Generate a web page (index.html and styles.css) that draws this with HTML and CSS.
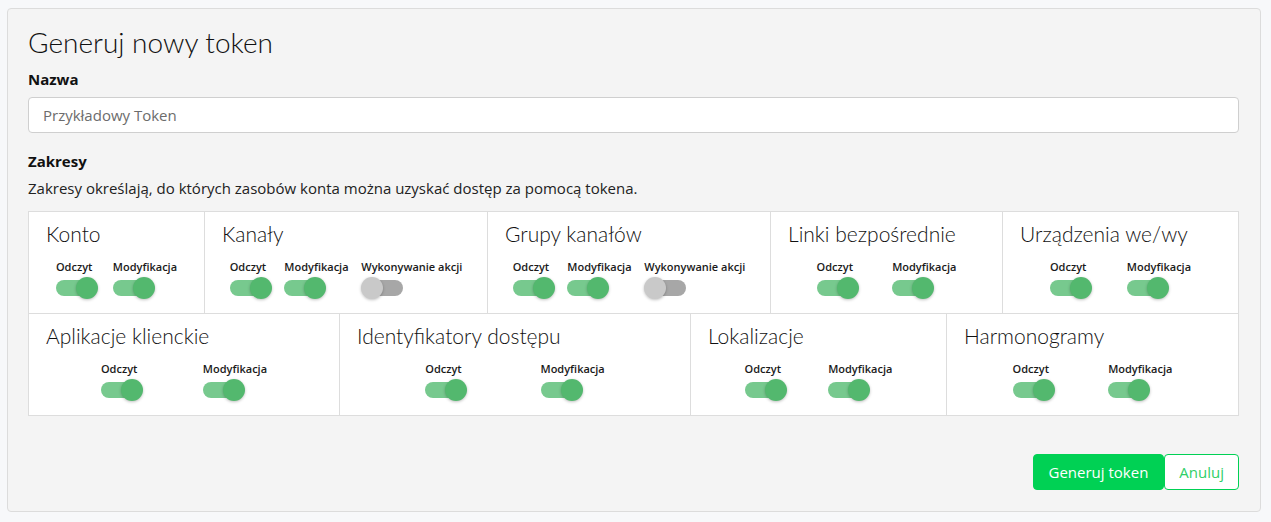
FILE: index.html
```html
<!DOCTYPE html>
<html>
  <head>
    <title>Generuj nowy token</title>
    <link rel="stylesheet" href="styles.css">
  </head>
  <body>
    <div class="panel">
      <h2 class="title">Generuj nowy token</h2>

      <label class="field-label" for="name">Nazwa</label>
      <input class="text-input" type="text" id="name" name="name" placeholder="Przykładowy Token">

      <div class="field-label section-label">Zakresy</div>
      <p class="hint">Zakresy określają, do których zasobów konta można uzyskać dostęp za pomocą tokena.</p>

      <div class="scopes">
        <div class="scope-row row-top">
          <div class="scope">
            <h3 class="scope-title">Konto</h3>
            <div class="toggles">
              <div class="toggle"><span class="toggle-label">Odczyt</span><span class="switch on"><span class="track"></span><span class="knob"></span></span></div>
              <div class="toggle"><span class="toggle-label">Modyfikacja</span><span class="switch on"><span class="track"></span><span class="knob"></span></span></div>
            </div>
          </div>
          <div class="scope">
            <h3 class="scope-title">Kanały</h3>
            <div class="toggles">
              <div class="toggle"><span class="toggle-label">Odczyt</span><span class="switch on"><span class="track"></span><span class="knob"></span></span></div>
              <div class="toggle"><span class="toggle-label">Modyfikacja</span><span class="switch on"><span class="track"></span><span class="knob"></span></span></div>
              <div class="toggle"><span class="toggle-label">Wykonywanie akcji</span><span class="switch off"><span class="track"></span><span class="knob"></span></span></div>
            </div>
          </div>
          <div class="scope">
            <h3 class="scope-title">Grupy kanałów</h3>
            <div class="toggles">
              <div class="toggle"><span class="toggle-label">Odczyt</span><span class="switch on"><span class="track"></span><span class="knob"></span></span></div>
              <div class="toggle"><span class="toggle-label">Modyfikacja</span><span class="switch on"><span class="track"></span><span class="knob"></span></span></div>
              <div class="toggle"><span class="toggle-label">Wykonywanie akcji</span><span class="switch off"><span class="track"></span><span class="knob"></span></span></div>
            </div>
          </div>
          <div class="scope">
            <h3 class="scope-title">Linki bezpośrednie</h3>
            <div class="toggles">
              <div class="toggle"><span class="toggle-label">Odczyt</span><span class="switch on"><span class="track"></span><span class="knob"></span></span></div>
              <div class="toggle"><span class="toggle-label">Modyfikacja</span><span class="switch on"><span class="track"></span><span class="knob"></span></span></div>
            </div>
          </div>
          <div class="scope">
            <h3 class="scope-title">Urządzenia we/wy</h3>
            <div class="toggles">
              <div class="toggle"><span class="toggle-label">Odczyt</span><span class="switch on"><span class="track"></span><span class="knob"></span></span></div>
              <div class="toggle"><span class="toggle-label">Modyfikacja</span><span class="switch on"><span class="track"></span><span class="knob"></span></span></div>
            </div>
          </div>
        </div>

        <div class="scope-row row-bottom">
          <div class="scope">
            <h3 class="scope-title">Aplikacje klienckie</h3>
            <div class="toggles">
              <div class="toggle"><span class="toggle-label">Odczyt</span><span class="switch on"><span class="track"></span><span class="knob"></span></span></div>
              <div class="toggle"><span class="toggle-label">Modyfikacja</span><span class="switch on"><span class="track"></span><span class="knob"></span></span></div>
            </div>
          </div>
          <div class="scope">
            <h3 class="scope-title">Identyfikatory dostępu</h3>
            <div class="toggles">
              <div class="toggle"><span class="toggle-label">Odczyt</span><span class="switch on"><span class="track"></span><span class="knob"></span></span></div>
              <div class="toggle"><span class="toggle-label">Modyfikacja</span><span class="switch on"><span class="track"></span><span class="knob"></span></span></div>
            </div>
          </div>
          <div class="scope">
            <h3 class="scope-title">Lokalizacje</h3>
            <div class="toggles">
              <div class="toggle"><span class="toggle-label">Odczyt</span><span class="switch on"><span class="track"></span><span class="knob"></span></span></div>
              <div class="toggle"><span class="toggle-label">Modyfikacja</span><span class="switch on"><span class="track"></span><span class="knob"></span></span></div>
            </div>
          </div>
          <div class="scope">
            <h3 class="scope-title">Harmonogramy</h3>
            <div class="toggles">
              <div class="toggle"><span class="toggle-label">Odczyt</span><span class="switch on"><span class="track"></span><span class="knob"></span></span></div>
              <div class="toggle"><span class="toggle-label">Modyfikacja</span><span class="switch on"><span class="track"></span><span class="knob"></span></span></div>
            </div>
          </div>
        </div>
      </div>

      <div class="actions">
        <button class="btn btn-green" type="button">Generuj token</button>
        <button class="btn btn-outline" type="button">Anuluj</button>
      </div>
    </div>
  </body>
</html>
```

FILE: styles.css
```css
body {
  margin: 0;
  background-color: #f7f8fa;
  font-family: "Open Sans", Arial, sans-serif;
  color: #1a1a1a;
}
.panel {
  margin: 8px 10px 10px 7px;
  padding: 16px 21px 21px 20px;
  background-color: #f4f4f4;
  border: 1px solid #dcdcdc;
  border-radius: 4px;
}
.title {
  margin: 0 0 9px;
  font-family: Lato, "Open Sans", sans-serif;
  font-weight: 300;
  font-size: 28px;
  line-height: 34px;
  color: #111;
}
.field-label {
  display: block;
  font-size: 15px;
  line-height: 22px;
  font-weight: 700;
  color: #111;
}
.text-input {
  display: block;
  box-sizing: border-box;
  width: 100%;
  height: 36px;
  margin: 7px 0 0;
  padding: 0 14px;
  font-family: "Open Sans", Arial, sans-serif;
  font-size: 15px;
  border: 1px solid #cfcfcf;
  border-radius: 4px;
  background: #fff;
}
.text-input::placeholder {
  color: #6c6c6c;
}
.section-label {
  margin-top: 17px;
}
.hint {
  margin: 5px 0 12px;
  font-size: 15px;
  line-height: 22px;
  color: #222;
}
.scopes {
  background-color: #fff;
  border-top: 1px solid #dddddd;
  border-left: 1px solid #dddddd;
}
.scope-row {
  display: grid;
}
.row-top {
  grid-template-columns: 176fr 283fr 283fr 232fr 236fr;
}
.row-bottom {
  grid-template-columns: 311fr 351fr 256fr 292fr;
}
.scope {
  padding: 9px 17px 14px;
  border-right: 1px solid #dddddd;
  border-bottom: 1px solid #dddddd;
}
.scope-title {
  margin: 0 0 13px;
  font-family: Lato, "Open Sans", sans-serif;
  font-weight: 300;
  font-size: 21px;
  line-height: 26px;
  color: #111;
}
.toggles {
  display: flex;
  justify-content: space-evenly;
}
.toggle {
  display: flex;
  flex-direction: column;
  align-items: flex-start;
  margin: 0 5px;
}
.toggle-label {
  font-size: 11px;
  line-height: 14px;
  font-weight: 600;
  color: #1a1a1a;
  white-space: nowrap;
}
.switch {
  position: relative;
  display: block;
  width: 42px;
  height: 22px;
  margin-top: 3px;
}
.track {
  position: absolute;
  top: 3px;
  left: 0;
  width: 38px;
  height: 16px;
  border-radius: 8px;
  background-color: #77c98e;
}
.knob {
  position: absolute;
  top: 0;
  left: 20px;
  width: 22px;
  height: 22px;
  border-radius: 50%;
  background-color: #53b86e;
  box-shadow: 0 1px 3px rgba(0, 0, 0, 0.25);
}
.switch.off .track {
  left: 4px;
  background-color: #a7a7a7;
}
.switch.off .knob {
  left: 0;
  background-color: #c9c9c9;
}
.actions {
  display: flex;
  justify-content: flex-end;
  margin-top: 38px;
}
.btn {
  height: 36px;
  padding: 0 14px;
  font-family: "Open Sans", Arial, sans-serif;
  font-size: 15px;
  border-radius: 4px;
  cursor: pointer;
}
.btn-green {
  padding: 0 15px;
  background-color: #00d154;
  border: 1px solid #00d154;
  color: #fff;
}
.btn-outline {
  background-color: #fff;
  border: 1px solid #00d154;
  color: #2fcf67;
}
```
